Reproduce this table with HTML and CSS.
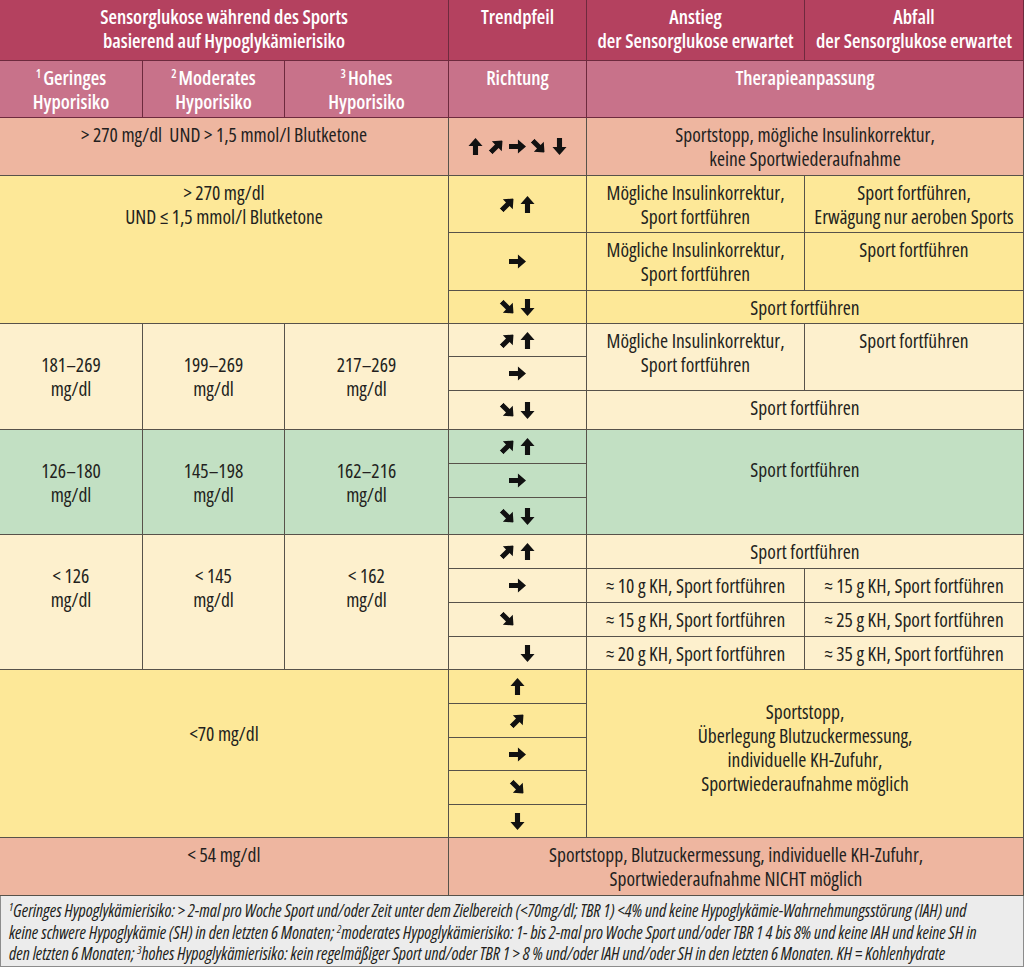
FILE: index.html
```html
<!DOCTYPE html>
<html lang="de">
<head>
<meta charset="utf-8">
<title>Sensorglukose während des Sports</title>
<link rel="stylesheet" href="styles.css">
</head>
<body>
<svg class="defs" aria-hidden="true">
  <defs>
    <symbol id="up" viewBox="0 0 16 16">
      <path d="M8 0 L14.6 7.6 L10.4 7.6 L10.4 16 L5.6 16 L5.6 7.6 L1.4 7.6 Z"/>
    </symbol>
  </defs>
</svg>

<div class="tbl">
  <!-- header row 1 -->
  <div class="c h1 s3">Sensorglukose während des Sports<br>basierend auf Hypoglykämierisiko</div>
  <div class="c h1">Trendpfeil</div>
  <div class="c h1">Anstieg<br>der Sensorglukose erwartet</div>
  <div class="c h1">Abfall<br>der Sensorglukose erwartet</div>

  <!-- header row 2 -->
  <div class="c h2"><sup>1</sup>Geringes<br>Hyporisiko</div>
  <div class="c h2"><sup>2</sup>Moderates<br>Hyporisiko</div>
  <div class="c h2"><sup>3</sup>Hohes<br>Hyporisiko</div>
  <div class="c h2">Richtung</div>
  <div class="c h2 s2">Therapieanpassung</div>

  <!-- > 270 und > 1,5 -->
  <div class="c sal s3">&gt; 270 mg/dl&nbsp; UND &gt; 1,5 mmol/l Blutketone</div>
  <div class="c sal arr five">
    <svg class="ar"><use href="#up"/></svg>
    <svg class="ar ne"><use href="#up"/></svg>
    <svg class="ar e"><use href="#up"/></svg>
    <svg class="ar se"><use href="#up"/></svg>
    <svg class="ar s"><use href="#up"/></svg>
  </div>
  <div class="c sal s2">Sportstopp, mögliche Insulinkorrektur,<br>keine Sportwiederaufnahme</div>

  <!-- > 270 und <= 1,5 -->
  <div class="c yel s3 rs3">&gt; 270 mg/dl<br>UND ≤ 1,5 mmol/l Blutketone</div>
  <div class="c yel arr"><svg class="ar ne"><use href="#up"/></svg><svg class="ar"><use href="#up"/></svg></div>
  <div class="c yel">Mögliche Insulinkorrektur,<br>Sport fortführen</div>
  <div class="c yel">Sport fortführen,<br>Erwägung nur aeroben Sports</div>
  <div class="c yel arr"><svg class="ar e"><use href="#up"/></svg></div>
  <div class="c yel">Mögliche Insulinkorrektur,<br>Sport fortführen</div>
  <div class="c yel">Sport fortführen</div>
  <div class="c yel arr"><svg class="ar se"><use href="#up"/></svg><svg class="ar s"><use href="#up"/></svg></div>
  <div class="c yel s2">Sport fortführen</div>

  <!-- 181-269 -->
  <div class="c lt rs3 mid">181–269<br>mg/dl</div>
  <div class="c lt rs3 mid">199–269<br>mg/dl</div>
  <div class="c lt rs3 mid">217–269<br>mg/dl</div>
  <div class="c lt arr"><svg class="ar ne"><use href="#up"/></svg><svg class="ar"><use href="#up"/></svg></div>
  <div class="c lt rs2">Mögliche Insulinkorrektur,<br>Sport fortführen</div>
  <div class="c lt rs2">Sport fortführen</div>
  <div class="c lt arr"><svg class="ar e"><use href="#up"/></svg></div>
  <div class="c lt arr"><svg class="ar se"><use href="#up"/></svg><svg class="ar s"><use href="#up"/></svg></div>
  <div class="c lt s2">Sport fortführen</div>

  <!-- 126-180 -->
  <div class="c grn rs3 mid">126–180<br>mg/dl</div>
  <div class="c grn rs3 mid">145–198<br>mg/dl</div>
  <div class="c grn rs3 mid">162–216<br>mg/dl</div>
  <div class="c grn arr"><svg class="ar ne"><use href="#up"/></svg><svg class="ar"><use href="#up"/></svg></div>
  <div class="c grn s2 rs3 pad-g">Sport fortführen</div>
  <div class="c grn arr"><svg class="ar e"><use href="#up"/></svg></div>
  <div class="c grn arr"><svg class="ar se"><use href="#up"/></svg><svg class="ar s"><use href="#up"/></svg></div>

  <!-- < 126 -->
  <div class="c lt rs4 mid">&lt; 126<br>mg/dl</div>
  <div class="c lt rs4 mid">&lt; 145<br>mg/dl</div>
  <div class="c lt rs4 mid">&lt; 162<br>mg/dl</div>
  <div class="c lt arr"><svg class="ar ne"><use href="#up"/></svg><svg class="ar"><use href="#up"/></svg></div>
  <div class="c lt s2">Sport fortführen</div>
  <div class="c lt arr"><svg class="ar e"><use href="#up"/></svg></div>
  <div class="c lt">≈ 10 g KH, Sport fortführen</div>
  <div class="c lt">≈ 15 g KH, Sport fortführen</div>
  <div class="c lt arr"><svg class="ar se"><use href="#up"/></svg><svg class="ar s ghost"><use href="#up"/></svg></div>
  <div class="c lt">≈ 15 g KH, Sport fortführen</div>
  <div class="c lt">≈ 25 g KH, Sport fortführen</div>
  <div class="c lt arr"><svg class="ar se ghost"><use href="#up"/></svg><svg class="ar s"><use href="#up"/></svg></div>
  <div class="c lt">≈ 20 g KH, Sport fortführen</div>
  <div class="c lt">≈ 35 g KH, Sport fortführen</div>

  <!-- < 70 -->
  <div class="c yel s3 rs5 pad-70">&lt;70 mg/dl</div>
  <div class="c yel arr"><svg class="ar"><use href="#up"/></svg></div>
  <div class="c yel s2 rs5 pad-70t">Sportstopp,<br>Überlegung Blutzuckermessung,<br>individuelle KH-Zufuhr,<br>Sportwiederaufnahme möglich</div>
  <div class="c yel arr"><svg class="ar ne"><use href="#up"/></svg></div>
  <div class="c yel arr"><svg class="ar e"><use href="#up"/></svg></div>
  <div class="c yel arr"><svg class="ar se"><use href="#up"/></svg></div>
  <div class="c yel arr"><svg class="ar s"><use href="#up"/></svg></div>

  <!-- < 54 -->
  <div class="c sal s3">&lt; 54 mg/dl</div>
  <div class="c sal s3">Sportstopp, Blutzuckermessung, individuelle KH-Zufuhr,<br>Sportwiederaufnahme NICHT möglich</div>
</div>

<div class="note">
  <sup>1</sup>Geringes Hypoglykämierisiko: &gt; 2-mal pro Woche Sport und/oder Zeit unter dem Zielbereich (&lt;70mg/dl; TBR 1) &lt;4% und keine Hypoglykämie-Wahrnehmungsstörung (IAH) und<br>
  keine schwere Hypoglykämie (SH) in den letzten 6 Monaten; <sup>2</sup>moderates Hypoglykämierisiko: 1- bis 2-mal pro Woche Sport und/oder TBR 1 4 bis 8% und keine IAH und keine SH in<br>
  den letzten 6 Monaten; <sup>3</sup>hohes Hypoglykämierisiko: kein regelmäßiger Sport und/oder TBR 1 &gt; 8 % und/oder IAH und/oder SH in den letzten 6 Monaten. KH = Kohlenhydrate
</div>
</body>
</html>
```
FILE: styles.css
```css
html, body {
  margin: 0;
  padding: 0;
  background: #ffffff;
}

body {
  font-family: "Open Sans", "Liberation Sans", sans-serif;
  font-stretch: 75%;
  font-size: 19.5px;
  line-height: 24px;
  color: #231f20;
  width: 1024px;
}

.defs {
  position: absolute;
  width: 0;
  height: 0;
  overflow: hidden;
}

.tbl {
  display: grid;
  grid-template-columns: 143px 142px 164px 138px 218px 219px;
  grid-template-rows:
    61px 57px 58px
    57px 58px 33px
    33px 34px 39px
    34px 34px 37px
    34px 34px 34px 33px
    34px 34px 33px 34px 33px
    58px;
}

.c {
  box-sizing: border-box;
  border-right: 1px solid #57524a;
  border-bottom: 1px solid #57524a;
  text-align: center;
  padding: 5px 2px 0;
  white-space: nowrap;
}

.s2 { grid-column: span 2; }
.s3 { grid-column: span 3; }
.rs2 { grid-row: span 2; }
.rs3 { grid-row: span 3; }
.rs4 { grid-row: span 4; }
.rs5 { grid-row: span 5; }

.h1 {
  background: #b4415f;
  color: #ffffff;
  font-weight: 600;
  border-color: #6e2a3e;
}
.h2 {
  background: #c8728a;
  color: #ffffff;
  font-weight: 600;
  border-color: #6e2a3e;
}
.h2 sup {
  font-size: 12px;
  line-height: 0;
  vertical-align: 7px;
  margin-right: 2px;
}

.sal { background: #eeb6a0; }
.yel { background: #fde898; }
.lt  { background: #fdf0cd; }
.grn { background: #c2e0c3; }

.mid { padding-top: 29px; }
.pad-g { padding-top: 28px; }
.pad-70 { padding-top: 52px; }
.pad-70t { padding-top: 30px; }

.arr {
  display: flex;
  align-items: center;
  justify-content: center;
  gap: 3px;
  padding: 0;
}
.arr.five { gap: 4px; }

.ar {
  width: 17px;
  height: 17px;
  fill: #111111;
  flex: none;
}
.ne { transform: rotate(45deg); }
.e  { transform: rotate(90deg); }
.se { transform: rotate(135deg); }
.s  { transform: rotate(180deg); }
.ghost { visibility: hidden; }

.note {
  box-sizing: border-box;
  height: 71px;
  background: #ececec;
  border: 1px solid #8c8c8c;
  border-top: none;
  font-style: italic;
  font-size: 17.3px;
  line-height: 21.5px;
  padding: 4px 8px 0;
  white-space: nowrap;
  color: #231f20;
}
.note sup {
  font-size: 11px;
  line-height: 0;
  vertical-align: 6px;
}
```
